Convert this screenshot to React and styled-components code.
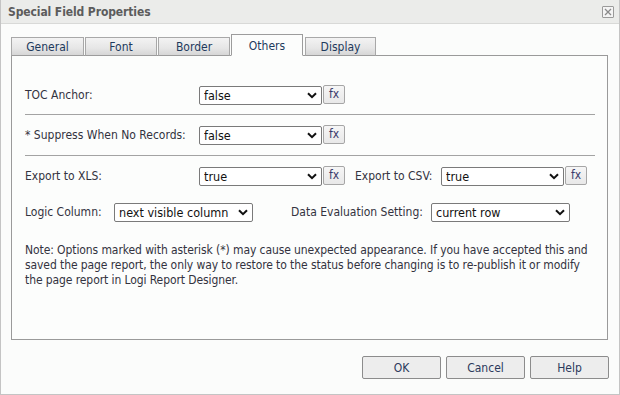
import React from 'react'
import styled, { createGlobalStyle } from 'styled-components'

const Global = createGlobalStyle`
html, body {
  margin: 0;
  padding: 0;
  background: #ffffff;
}
* { box-sizing: border-box; }
`

const FONT = `"DejaVu Sans Condensed", "DejaVu Sans", Verdana, sans-serif`

const Dialog = styled.div`
width: 620px;
height: 395px;
background: #fbfcfb;
border: 1px solid #c4c4c4;
border-top: none;
display: flex;
flex-direction: column;
font-family: ${FONT};
font-size: 12px;
color: #333340;
`

const TitleBar = styled.div`
height: 24px;
background: #ebecea;
border-bottom: 1px solid #d8d9d7;
display: flex;
align-items: center;
justify-content: space-between;
padding: 0 5px 0 7px;
`

const Title = styled.div`
font-weight: bold;
font-size: 12px;
letter-spacing: -0.1px;
color: #5c5c5c;
`

const CloseBox = styled.div`
width: 12px;
height: 12px;
border: 1px solid #9a9a9a;
border-radius: 1px;
display: flex;
align-items: center;
justify-content: center;
background: #f4f4f4;
`

const Body = styled.div`
padding: 10px 11px 0 10px;
display: flex;
flex-direction: column;
`

const TabStrip = styled.div`
display: flex;
align-items: flex-end;
height: 22px;
gap: 1px;
position: relative;
z-index: 1;
margin-bottom: -1px;
`

const Tab = styled.div`
width: ${p => p.w}px;
height: ${p => (p.active ? 22 : 19)}px;
margin-right: ${p => p.mr || 0}px;
border: 1px solid ${p => (p.active ? '#9c9c9c' : '#a8a8a8')};
border-bottom: ${p => (p.active ? '1px solid #fcfdfc' : '1px solid #9c9c9c')};
background: ${p => (p.active ? '#fcfdfc' : 'linear-gradient(#f3f3f3, #e6e6e6 60%, #d6d6d6)')};
color: #1e3a5c;
display: flex;
align-items: center;
justify-content: center;
padding-top: ${p => (p.active ? 1 : 0)}px;
`

const Panel = styled.div`
height: 285px;
border: 1px solid #9a9a9a;
background: #fcfdfc;
padding: 29px 12px 0 13px;
display: flex;
flex-direction: column;
`

const Row = styled.div`
display: flex;
align-items: center;
height: 20px;
margin-top: ${p => p.mt || 0}px;
`

const Label = styled.div`
width: ${p => p.w}px;
margin-left: ${p => p.ml || 0}px;
white-space: nowrap;
`

const Divider = styled.div`
height: 1px;
background: #a3a3a3;
margin: ${p => p.m};
`

const SelectWrap = styled.div`
position: relative;
width: ${p => p.w}px;
height: 19px;
`

const Select = styled.select`
appearance: none;
width: 100%;
height: 100%;
border: 1px solid #7a7a7a;
border-radius: 2px;
background: #ffffff;
font-family: ${FONT};
font-size: 12.5px;
color: #111;
padding: 0 0 0 4px;
margin: 0;
outline: none;
`

const Chevron = styled.svg`
position: absolute;
right: 5px;
top: 6px;
pointer-events: none;
`

const FxButton = styled.button`
width: 22px;
height: 19px;
margin: -1px 0 0 1px;
padding: 0 0 1px 0;
border: 1px solid #a6a6a6;
border-radius: 2px;
background: linear-gradient(#f6f6f6, #e8e8e8);
font-family: ${FONT};
font-size: 12px;
color: #3a3a6a;
`

const Note = styled.p`
margin: 21px 0 0 0;
line-height: 15px;
letter-spacing: -0.09px;
white-space: nowrap;
`

const Footer = styled.div`
flex: 1;
display: flex;
justify-content: flex-end;
align-items: flex-start;
gap: 5px;
padding: 16px 10px 0 0;
`

const Btn = styled.button`
width: 79px;
height: 23px;
border: 1px solid #8c8c8c;
border-radius: 2px;
background: #ededed;
font-family: ${FONT};
font-size: 12px;
color: #2b3a5c;
padding: 0;
`

function Dropdown({ w, value }) {
  return (
    <SelectWrap w={w}>
      <Select defaultValue={value}>
        <option>{value}</option>
      </Select>
      <Chevron width="10" height="7" viewBox="0 0 10 7">
        <path d="M1 1.2 L5 5.2 L9 1.2" fill="none" stroke="#111" strokeWidth="2" />
      </Chevron>
    </SelectWrap>
  )
}

export default function App() {
  return (
    <>
      <Global />
      <Dialog>
        <TitleBar>
          <Title>Special Field Properties</Title>
          <CloseBox>
            <svg width="8" height="8" viewBox="0 0 8 8">
              <path d="M1 1 L7 7 M7 1 L1 7" stroke="#8a8a8a" strokeWidth="1.3" />
            </svg>
          </CloseBox>
        </TitleBar>
        <Body>
          <TabStrip>
            <Tab w={73}>General</Tab>
            <Tab w={72}>Font</Tab>
            <Tab w={72}>Border</Tab>
            <Tab w={72} active mr={1}>Others</Tab>
            <Tab w={71}>Display</Tab>
          </TabStrip>
          <Panel>
            <Row>
              <Label w={174}>TOC Anchor:</Label>
              <Dropdown w={123} value="false" />
              <FxButton>fx</FxButton>
            </Row>
            <Divider m="9px 0 10px 0" />
            <Row>
              <Label w={174}>* Suppress When No Records:</Label>
              <Dropdown w={123} value="false" />
              <FxButton>fx</FxButton>
            </Row>
            <Divider m="10px 0 10px 0" />
            <Row>
              <Label w={174}>Export to XLS:</Label>
              <Dropdown w={123} value="true" />
              <FxButton>fx</FxButton>
              <Label w={86} ml={10}>Export to CSV:</Label>
              <Dropdown w={123} value="true" />
              <FxButton>fx</FxButton>
            </Row>
            <Row mt={16}>
              <Label w={89}>Logic Column:</Label>
              <Dropdown w={139} value="next visible column" />
              <Label w={140} ml={38}>Data Evaluation Setting:</Label>
              <Dropdown w={139} value="current row" />
            </Row>
            <Note>
              Note: Options marked with asterisk (*) may cause unexpected appearance. If you have accepted this and<br />
              saved the page report, the only way to restore to the status before changing is to re-publish it or modify<br />
              the page report in Logi Report Designer.
            </Note>
          </Panel>
        </Body>
        <Footer>
          <Btn>OK</Btn>
          <Btn>Cancel</Btn>
          <Btn>Help</Btn>
        </Footer>
      </Dialog>
    </>
  )
}
